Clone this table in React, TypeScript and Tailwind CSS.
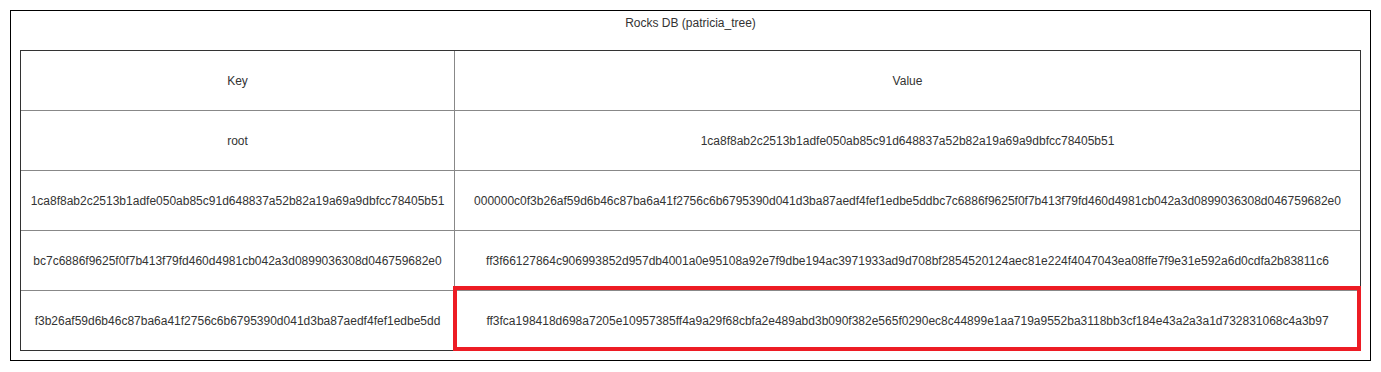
const rows = [
  {
    key: "root",
    value: "1ca8f8ab2c2513b1adfe050ab85c91d648837a52b82a19a69a9dbfcc78405b51",
  },
  {
    key: "1ca8f8ab2c2513b1adfe050ab85c91d648837a52b82a19a69a9dbfcc78405b51",
    value:
      "000000c0f3b26af59d6b46c87ba6a41f2756c6b6795390d041d3ba87aedf4fef1edbe5ddbc7c6886f9625f0f7b413f79fd460d4981cb042a3d0899036308d046759682e0",
  },
  {
    key: "bc7c6886f9625f0f7b413f79fd460d4981cb042a3d0899036308d046759682e0",
    value:
      "ff3f66127864c906993852d957db4001a0e95108a92e7f9dbe194ac3971933ad9d708bf2854520124aec81e224f4047043ea08ffe7f9e31e592a6d0cdfa2b83811c6",
  },
  {
    key: "f3b26af59d6b46c87ba6a41f2756c6b6795390d041d3ba87aedf4fef1edbe5dd",
    value:
      "ff3fca198418d698a7205e10957385ff4a9a29f68cbfa2e489abd3b090f382e565f0290ec8c44899e1aa719a9552ba3118bb3cf184e43a2a3a1d732831068c4a3b97",
    highlight: true,
  },
];

export default function App() {
  return (
    <div className="w-[1381px] h-[372px] bg-white pt-[10px] pl-[10px] font-['Liberation_Sans',Arial,sans-serif] text-[12px] text-[#333]">
      <div className="w-[1361px] h-[351px] border border-black">
        <div className="h-[39px] pt-[5px] text-center leading-[14px]">
          Rocks DB (patricia_tree)
        </div>
        <div className="mx-[9px] border border-[#333]">
          <div className="flex h-[59px]">
            <div className="w-[433px] flex items-center justify-center">Key</div>
            <div className="flex-1 border-l border-[#888] flex items-center justify-center">
              Value
            </div>
          </div>
          {rows.map((row) => (
            <div
              key={row.key}
              className="relative flex h-[60px] border-t border-[#888]"
            >
              <div className="w-[433px] flex items-center justify-center">
                {row.key}
              </div>
              <div className="flex-1 border-l border-[#888] flex items-center justify-center">
                {row.value}
              </div>
              {row.highlight && (
                <div className="absolute left-[432px] top-[-5px] w-[908px] h-[65px] border-4 border-[#ed1c24]" />
              )}
            </div>
          ))}
        </div>
      </div>
    </div>
  );
}
